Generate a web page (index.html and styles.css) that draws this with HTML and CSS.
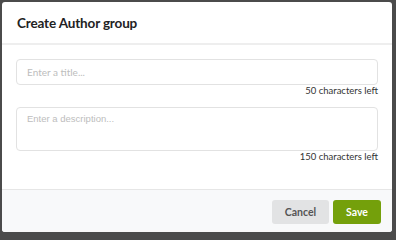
FILE: index.html
```html
<!DOCTYPE html>
<html>
<head>
<meta charset="utf-8">
<link rel="stylesheet" href="styles.css">
</head>
<body>
<div class="dialog">
  <div class="header">
    <h1 class="title">Create Author group</h1>
  </div>
  <div class="content">
    <input class="field" type="text" placeholder="Enter a title...">
    <div class="counter">50 characters left</div>
    <textarea class="field area" placeholder="Enter a description..."></textarea>
    <div class="counter">150 characters left</div>
  </div>
  <div class="footer">
    <button class="btn cancel">Cancel</button>
    <button class="btn save">Save</button>
  </div>
</div>
</body>
</html>
```
FILE: styles.css
```css
html, body {
  margin: 0;
  padding: 0;
  background: #4b4b4b;
  width: 396px;
  height: 234px;
  overflow: hidden;
}
body {
  padding: 2px 0 0 2px;
  box-sizing: border-box;
  font-family: Lato, "Noto Sans", sans-serif;
}
.dialog {
  width: 390px;
  height: 230px;
  background: #fff;
  border-radius: 3px;
  display: flex;
  flex-direction: column;
  overflow: hidden;
}
.header {
  height: 41px;
  border-bottom: 2px solid #eeeeee;
  display: flex;
  align-items: center;
  padding-left: 15px;
}
.title {
  margin: 0;
  font-size: 13.5px;
  font-weight: 700;
  color: #222;
  letter-spacing: -0.15px;
}
.content {
  flex: 1;
  padding: 14px 14px 0 14px;
  display: flex;
  flex-direction: column;
}
.field {
  display: block;
  box-sizing: border-box;
  width: 362px;
  height: 26px;
  margin: 0;
  border: 1px solid #e2e2e2;
  border-radius: 4px;
  padding: 0 10px;
  font-family: Lato, sans-serif;
  font-size: 10px;
  color: #333;
  outline: none;
}
.field::placeholder {
  color: #bdbdbd;
}
.area {
  height: 44px;
  padding: 5px 10px;
  resize: none;
  margin-top: 10px;
  font-family: "Liberation Sans", Arial, sans-serif;
  font-size: 9.5px;
}
.counter {
  text-align: right;
  font-size: 9.5px;
  color: #333;
  height: 12px;
  line-height: 12px;
  margin-top: 0;
}
.footer {
  height: 43px;
  border-top: 1px solid #e6e6e6;
  background: #f8f9fa;
  display: flex;
  justify-content: flex-end;
  align-items: flex-start;
  padding: 10px 11px 0 0;
  box-sizing: border-box;
  gap: 4px;
}
.btn {
  height: 24px;
  border: none;
  border-radius: 3px;
  font-family: Lato, sans-serif;
  font-size: 10.5px;
  font-weight: 700;
  padding: 0;
  cursor: pointer;
}
.cancel {
  width: 57px;
  background: #e2e3e4;
  color: #555;
}
.save {
  width: 48px;
  background: #74a00b;
  color: #fff;
}
```
